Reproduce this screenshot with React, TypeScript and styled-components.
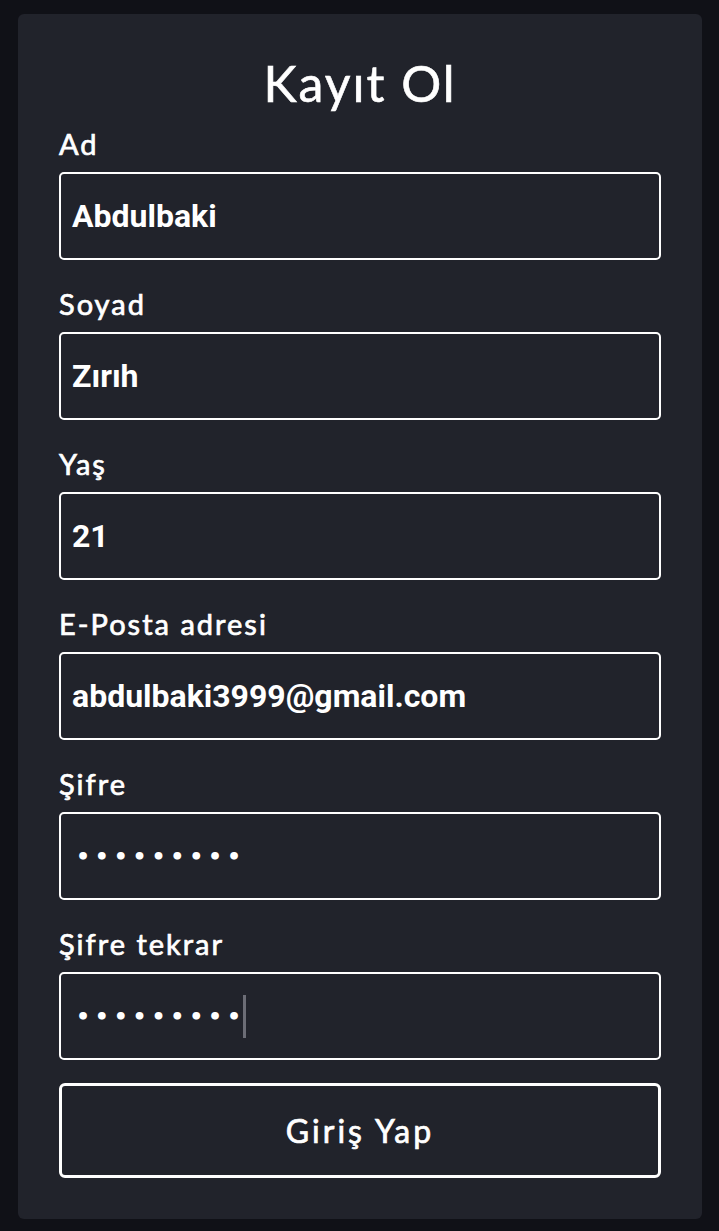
import React from "react";
import styled, { createGlobalStyle } from "styled-components";

const GlobalStyle = createGlobalStyle`
  html, body {
    margin: 0;
    padding: 0;
    background: #101117;
  }
  * { box-sizing: border-box; }
`;

const Page = styled.div`
  padding: 14px 17px 13px 18px;
  background: #101117;
  min-height: 1231px;
`;

const Card = styled.form`
  background: #21232b;
  border-radius: 6px;
  padding: 0 41px 41px 41px;
  display: flex;
  flex-direction: column;
`;

const Title = styled.h1`
  margin: 0;
  padding-top: 39px;
  text-align: center;
  color: #ffffff;
  font-family: Lato, "Liberation Sans", sans-serif;
  font-weight: 400;
  font-size: 50px;
  line-height: 60px;
  letter-spacing: 2px;
  -webkit-text-stroke: 0.6px #ffffff;
`;

const Field = styled.div<{ $first?: boolean }>`
  display: flex;
  flex-direction: column;
  gap: 10px;
  margin-top: ${(p) => (p.$first ? "13px" : "26px")};
`;

const Label = styled.label`
  color: #ffffff;
  font-family: Lato, "Liberation Sans", sans-serif;
  font-weight: 400;
  font-size: 29px;
  line-height: 36px;
  letter-spacing: 2px;
  -webkit-text-stroke: 0.7px #ffffff;
`;

const Box = styled.div`
  height: 88px;
  border: 2px solid #ffffff;
  border-radius: 5px;
  padding: 0 11px;
  display: flex;
  align-items: center;
  color: #ffffff;
  font-family: Roboto, "Liberation Sans", sans-serif;
  font-weight: 700;
  font-size: 32px;
`;

const Dots = styled.span`
  font-family: "DejaVu Sans", sans-serif;
  font-size: 22px;
  letter-spacing: 4.8px;
  padding-left: 4px;
  color: #ffffff;
`;

const Caret = styled.span`
  display: inline-block;
  width: 3px;
  height: 43px;
  background: #6c6d76;
  margin-left: -3px;
`;

const Button = styled.button`
  margin-top: 23px;
  height: 95px;
  flex: none;
  border: 3px solid #ffffff;
  border-radius: 6px;
  background: transparent;
  color: #ffffff;
  font-family: Lato, "Liberation Sans", sans-serif;
  font-weight: 400;
  font-size: 32px;
  letter-spacing: 3px;
  -webkit-text-stroke: 0.7px #ffffff;
`;

const fields = [
  { label: "Ad", value: "Abdulbaki" },
  { label: "Soyad", value: "Zırıh" },
  { label: "Yaş", value: "21" },
  { label: "E-Posta adresi", value: "abdulbaki3999@gmail.com" },
];

export default function App() {
  return (
    <>
      <GlobalStyle />
      <Page>
        <Card onSubmit={(e) => e.preventDefault()}>
          <Title>Kayıt Ol</Title>
          {fields.map((f, i) => (
            <Field key={f.label} $first={i === 0}>
              <Label>{f.label}</Label>
              <Box>{f.value}</Box>
            </Field>
          ))}
          <Field>
            <Label>Şifre</Label>
            <Box>
              <Dots>•••••••••</Dots>
            </Box>
          </Field>
          <Field>
            <Label>Şifre tekrar</Label>
            <Box>
              <Dots>•••••••••</Dots>
              <Caret />
            </Box>
          </Field>
          <Button type="submit">Giriş Yap</Button>
        </Card>
      </Page>
    </>
  );
}
